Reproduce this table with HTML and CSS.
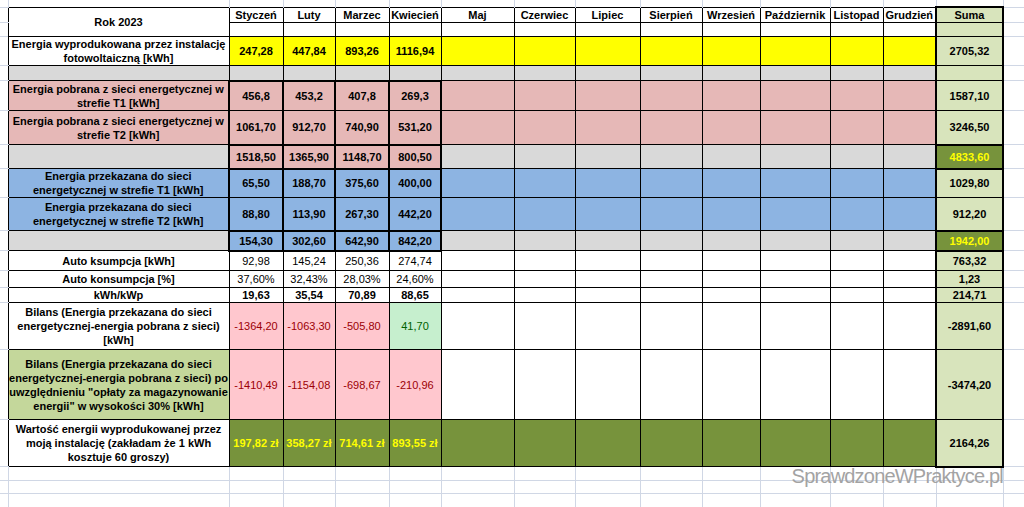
FILE: index.html
```html
<!DOCTYPE html>
<html lang="pl">
<head>
<meta charset="utf-8">
<title>Rok 2023</title>
<link rel="stylesheet" href="styles.css">
</head>
<body>
<div class="sheet">
<table class="grid">
<colgroup>
<col class="w8"><col class="w221"><col class="w54"><col class="w52"><col class="w54"><col class="w52"><col class="w73"><col class="w61"><col class="w65"><col class="w62"><col class="w58"><col class="w70"><col class="w53"><col class="w53"><col class="w67"><col class="w21">
</colgroup>
<tr class="h7"><td class="m0"></td><td class="mt"></td><td class="mt"></td><td class="mt"></td><td class="mt"></td><td class="mt"></td><td class="mt"></td><td class="mt"></td><td class="mt"></td><td class="mt"></td><td class="mt"></td><td class="mt"></td><td class="mt"></td><td class="mt"></td><td class="mt"></td><td class="ma"></td></tr>
<tr class="h15"><td class="ma"></td><td rowspan="2">Rok 2023</td><td>Styczeń</td><td>Luty</td><td>Marzec</td><td>Kwiecień</td><td>Maj</td><td>Czerwiec</td><td>Lipiec</td><td>Sierpień</td><td>Wrzesień</td><td>Październik</td><td>Listopad</td><td>Grudzień</td><td class="s k kt">Suma</td><td class="ma"></td></tr>
<tr class="h14"><td class="ma"></td><td></td><td></td><td></td><td></td><td></td><td></td><td></td><td></td><td></td><td></td><td></td><td></td><td class="s k"></td><td class="ma"></td></tr>
<tr class="h29"><td class="ma"></td><td>Energia wyprodukowana przez instalację<br>fotowoltaiczną [kWh]</td><td class="y">247,28</td><td class="y">447,84</td><td class="y">893,26</td><td class="y">1116,94</td><td class="y"></td><td class="y"></td><td class="y"></td><td class="y"></td><td class="y"></td><td class="y"></td><td class="y"></td><td class="y"></td><td class="s k">2705,32</td><td class="ma"></td></tr>
<tr class="h15"><td class="ma"></td><td class="g"></td><td class="g"></td><td class="g"></td><td class="g"></td><td class="g"></td><td class="g"></td><td class="g"></td><td class="g"></td><td class="g"></td><td class="g"></td><td class="g"></td><td class="g"></td><td class="g"></td><td class="s k"></td><td class="ma"></td></tr>
<tr class="h30"><td class="ma"></td><td class="p">Energia pobrana z sieci energetycznej w<br>strefie T1 [kWh]</td><td class="p k kt">456,8</td><td class="p k kt">453,2</td><td class="p k kt">407,8</td><td class="p k kt">269,3</td><td class="p"></td><td class="p"></td><td class="p"></td><td class="p"></td><td class="p"></td><td class="p"></td><td class="p"></td><td class="p"></td><td class="s k">1587,10</td><td class="ma"></td></tr>
<tr class="h34"><td class="ma"></td><td class="p">Energia pobrana z sieci energetycznej w<br>strefie T2 [kWh]</td><td class="p k">1061,70</td><td class="p k">912,70</td><td class="p k">740,90</td><td class="p k">531,20</td><td class="p"></td><td class="p"></td><td class="p"></td><td class="p"></td><td class="p"></td><td class="p"></td><td class="p"></td><td class="p"></td><td class="s k">3246,50</td><td class="ma"></td></tr>
<tr class="h24"><td class="ma"></td><td class="g"></td><td class="p k kt kb">1518,50</td><td class="p k kt kb">1365,90</td><td class="p k kt kb">1148,70</td><td class="p k kt kb">800,50</td><td class="g"></td><td class="g"></td><td class="g"></td><td class="g"></td><td class="g"></td><td class="g"></td><td class="g"></td><td class="g"></td><td class="o k kt kb">4833,60</td><td class="ma"></td></tr>
<tr class="h29"><td class="ma"></td><td class="b">Energia przekazana do sieci<br>energetycznej w strefie T1 [kWh]</td><td class="b k kt">65,50</td><td class="b k kt">188,70</td><td class="b k kt">375,60</td><td class="b k kt">400,00</td><td class="b"></td><td class="b"></td><td class="b"></td><td class="b"></td><td class="b"></td><td class="b"></td><td class="b"></td><td class="b"></td><td class="s k">1029,80</td><td class="ma"></td></tr>
<tr class="h33"><td class="ma"></td><td class="b">Energia przekazana do sieci<br>energetycznej w strefie T2 [kWh]</td><td class="b k">88,80</td><td class="b k">113,90</td><td class="b k">267,30</td><td class="b k">442,20</td><td class="b"></td><td class="b"></td><td class="b"></td><td class="b"></td><td class="b"></td><td class="b"></td><td class="b"></td><td class="b"></td><td class="s k">912,20</td><td class="ma"></td></tr>
<tr class="h20"><td class="ma"></td><td class="g"></td><td class="b k kt kb">154,30</td><td class="b k kt kb">302,60</td><td class="b k kt kb">642,90</td><td class="b k kt kb">842,20</td><td class="g"></td><td class="g"></td><td class="g"></td><td class="g"></td><td class="g"></td><td class="g"></td><td class="g"></td><td class="g"></td><td class="o k kt kb">1942,00</td><td class="ma"></td></tr>
<tr class="h20"><td class="ma"></td><td>Auto ksumpcja [kWh]</td><td class="n">92,98</td><td class="n">145,24</td><td class="n">250,36</td><td class="n">274,74</td><td></td><td></td><td></td><td></td><td></td><td></td><td></td><td></td><td class="s k">763,32</td><td class="ma"></td></tr>
<tr class="h17"><td class="ma"></td><td>Auto konsumpcja [%]</td><td class="n">37,60%</td><td class="n">32,43%</td><td class="n">28,03%</td><td class="n">24,60%</td><td></td><td></td><td></td><td></td><td></td><td></td><td></td><td></td><td class="s k">1,23</td><td class="ma"></td></tr>
<tr class="h15"><td class="ma"></td><td>kWh/kWp</td><td>19,63</td><td>35,54</td><td>70,89</td><td>88,65</td><td></td><td></td><td></td><td></td><td></td><td></td><td></td><td></td><td class="s k">214,71</td><td class="ma"></td></tr>
<tr class="h47"><td class="ma"></td><td>Bilans (Energia przekazana do sieci<br>energetycznej-energia pobrana z sieci)<br>[kWh]</td><td class="bad">-1364,20</td><td class="bad">-1063,30</td><td class="bad">-505,80</td><td class="good">41,70</td><td></td><td></td><td></td><td></td><td></td><td></td><td></td><td></td><td class="s k">-2891,60</td><td class="ma"></td></tr>
<tr class="h70"><td class="ma"></td><td class="lg">Bilans (Energia przekazana do sieci<br>energetycznej-energia pobrana z sieci) po<br>uwzględnieniu "opłaty za magazynowanie<br>energii" w wysokości 30% [kWh]</td><td class="bad">-1410,49</td><td class="bad">-1154,08</td><td class="bad">-698,67</td><td class="bad">-210,96</td><td></td><td></td><td></td><td></td><td></td><td></td><td></td><td></td><td class="s k">-3474,20</td><td class="ma"></td></tr>
<tr class="h47"><td class="ma"></td><td>Wartość energii wyprodukowanej przez<br>moją instalację (zakładam że 1 kWh<br>kosztuje 60 groszy)</td><td class="o">197,82 zł</td><td class="o">358,27 zł</td><td class="o">714,61 zł</td><td class="o">893,55 zł</td><td class="o"></td><td class="o"></td><td class="o"></td><td class="o"></td><td class="o"></td><td class="o"></td><td class="o"></td><td class="o"></td><td class="s k kb">2164,26</td><td class="ma"></td></tr>
<tr class="h14"><td class="mb"></td><td class="mb"></td><td class="mb"></td><td class="mb"></td><td class="mb"></td><td class="mb"></td><td class="mb"></td><td class="mb"></td><td class="mb"></td><td class="mb"></td><td class="mb"></td><td class="mb"></td><td class="mb"></td><td class="mb"></td><td class="mb"></td><td class="ma"></td></tr>
<tr class="h13"><td class="mb"></td><td class="mb"></td><td class="mb"></td><td class="mb"></td><td class="mb"></td><td class="mb"></td><td class="mb"></td><td class="mb"></td><td class="mb"></td><td class="mb"></td><td class="mb"></td><td class="mb"></td><td class="mb"></td><td class="mb"></td><td class="mb"></td><td class="ma"></td></tr>
<tr class="h14"><td class="mb"></td><td class="mb"></td><td class="mb"></td><td class="mb"></td><td class="mb"></td><td class="mb"></td><td class="mb"></td><td class="mb"></td><td class="mb"></td><td class="mb"></td><td class="mb"></td><td class="mb"></td><td class="mb"></td><td class="mb"></td><td class="mb"></td><td class="ma"></td></tr>
</table>
<div class="watermark">SprawdzoneWPraktyce.pl</div>
</div>
</body>
</html>
```
FILE: styles.css
```css
html, body {
  margin: 0;
  padding: 0;
  background: #ffffff;
  overflow: hidden;
}
body {
  width: 1024px;
  height: 507px;
  font-family: "Liberation Sans", Arial, sans-serif;
}
.sheet {
  position: relative;
  width: 1024px;
  height: 507px;
  overflow: hidden;
}
.grid {
  border-collapse: collapse;
  table-layout: fixed;
  width: 1024px;
  font-size: 11px;
  font-weight: bold;
  color: #000;
}
.grid td {
  border: 1px solid #000;
  padding: 0;
  text-align: center;
  vertical-align: middle;
  line-height: 14px;
  white-space: nowrap;
}
.w8 { width: 8px; }
.w221 { width: 221px; }
.w54 { width: 54px; }
.w52 { width: 52px; }
.w73 { width: 73px; }
.w61 { width: 61px; }
.w65 { width: 65px; }
.w62 { width: 62px; }
.w58 { width: 58px; }
.w70 { width: 70px; }
.w53 { width: 53px; }
.w67 { width: 67px; }
.w21 { width: 21px; }

.h7 { height: 7px; }
.h13 { height: 13px; }
.h14 { height: 14px; }
.h15 { height: 15px; }
.h17 { height: 17px; }
.h20 { height: 20px; }
.h24 { height: 24px; }
.h29 { height: 29px; }
.h30 { height: 30px; }
.h33 { height: 33px; }
.h34 { height: 34px; }
.h47 { height: 47px; }
.h70 { height: 70px; }

.y { background: #ffff00; }
.g { background: #d9d9d9; }
.p { background: #e6b8b7; }
.b { background: #8db4e2; }
.s { background: #d8e4bc; }
.lg { background: #c4d79b; }
.o { background: #77933c; color: #ffff00; }
.bad { background: #ffc7ce; color: #9c0006; font-weight: normal; }
.good { background: #c6efce; color: #006100; font-weight: normal; }
.n { font-weight: normal; }

.grid .k { border-left: 2px solid #000; border-right: 2px solid #000; }
.grid .kt { border-top: 2px solid #000; }
.grid .kb { border-bottom: 2px solid #000; }

.grid .m0 {
  border: none;
  border-right: 1px solid #d0d7e5;
  border-bottom: 1px solid #d0d7e5;
}
.grid .mt {
  border: none;
  border-right: 1px solid #d0d7e5;
}
.grid .ma {
  border: none;
  border-bottom: 1px solid #d0d7e5;
}
.grid .mb {
  border: none;
  border-right: 1px solid #d0d7e5;
  border-bottom: 1px solid #d0d7e5;
}

.watermark {
  position: absolute;
  right: 21px;
  top: 464px;
  font-size: 20px;
  line-height: 24px;
  letter-spacing: -0.8px;
  color: #a3a3a3;
  white-space: nowrap;
}
```
